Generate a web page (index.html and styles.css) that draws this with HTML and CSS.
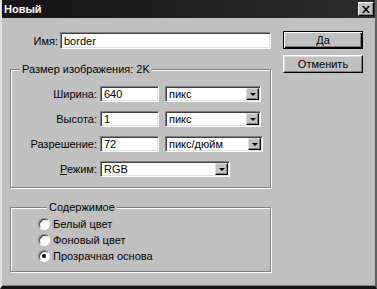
FILE: index.html
```html
<!DOCTYPE html>
<html lang="ru">
<head>
  <meta charset="UTF-8">
  <title>Новый</title>
  <link rel="stylesheet" href="styles.css">
</head>
<body>

<div class="window">
  <div class="titlebar">
    <span class="title">Новый</span>
    <button class="close-btn">
      <svg width="8" height="7" viewBox="0 0 8 7"><path d="M0 0h2l2 2.5 2-2.5h2l-3 3.5 3 3.5h-2l-2-2.5-2 2.5h-2l3-3.5z" fill="#000"/></svg>
    </button>
  </div>

  <div class="content">
    <div class="main">
      <div class="name-row">
        <label class="name-label">Имя:</label>
        <input class="field name-field" value="border">
      </div>

      <!-- Размер -->
      <fieldset class="group size-group">
        <legend>Размер изображения: 2K</legend>
        <div class="row">
          <label class="row-label">Ширина:</label>
          <input class="field num-field" value="640">
          <div class="combo unit"><span>пикс</span><i class="combo-btn"></i></div>
        </div>
        <div class="row">
          <label class="row-label">Высота:</label>
          <input class="field num-field" value="1">
          <div class="combo unit"><span>пикс</span><i class="combo-btn"></i></div>
        </div>
        <div class="row">
          <label class="row-label">Разрешение:</label>
          <input class="field num-field" value="72">
          <div class="combo unit wide"><span>пикс/дюйм</span><i class="combo-btn"></i></div>
        </div>
        <div class="row">
          <label class="row-label"><u>Р</u>ежим:</label>
          <div class="combo mode"><span>RGB</span><i class="combo-btn"></i></div>
        </div>
      </fieldset>

      <!-- Содержимое -->
      <fieldset class="group fill-group">
        <legend>Содержимое</legend>
        <label class="radio"><span class="radio-dot"></span>Белый цвет</label>
        <label class="radio"><span class="radio-dot"></span>Фоновый цвет</label>
        <label class="radio"><span class="radio-dot checked"></span>Прозрачная основа</label>
      </fieldset>
    </div>

    <div class="buttons">
      <button class="btn default">Да</button>
      <button class="btn">Отменить</button>
    </div>
  </div>
</div>

</body>
</html>
```

FILE: styles.css
```css
* {
  box-sizing: border-box;
}

body {
  margin: 0;
  width: 377px;
  height: 289px;
  overflow: hidden;
  background: #c0c0c0;
  font-family: "Liberation Sans", Arial, sans-serif;
  font-size: 11px;
  color: #000;
}

.window {
  height: 289px;
  border-left: 2px solid #e0e0e0;
  border-right: 2px solid #606060;
  border-bottom: 3px solid #151515;
  box-shadow: inset 0 -1px 0 #808080;
}

/* title bar */
.titlebar {
  height: 18px;
  display: flex;
  align-items: center;
  justify-content: space-between;
  padding: 0 1px 0 2px;
  background: linear-gradient(to right, #141414, #2c2c2c);
}

.title {
  color: #fff;
  font-weight: 700;
  font-size: 11px;
}

.close-btn {
  width: 16px;
  height: 14px;
  padding: 0;
  display: flex;
  align-items: center;
  justify-content: center;
  background: #c0c0c0;
  border: 1px solid;
  border-color: #fff #000 #000 #fff;
  box-shadow: inset -1px -1px #808080;
}

/* layout */
.content {
  display: flex;
  padding: 14px 0 0 8px;
}

.main {
  width: 261px;
}

.buttons {
  display: flex;
  flex-direction: column;
  gap: 6px;
  margin: -1px 0 0 12px;
}

/* fields */
.field {
  height: 16px;
  margin: 0;
  padding: 0 3px;
  font: inherit;
  color: #000;
  background: #fff;
  border: 1px solid;
  border-color: #808080 #fff #fff #808080;
  box-shadow: inset 1px 1px #404040, inset -1px -1px #dfdfdf;
  outline: none;
}

.name-row {
  display: flex;
  align-items: center;
}

.name-label {
  width: 48px;
  text-align: right;
  margin-right: 2px;
}

.name-field {
  width: 211px;
  height: 17px;
}

/* group boxes */
.group {
  margin: 14px 0 0;
  padding: 0;
  min-width: 0;
  border: 1px solid #808080;
  box-shadow: inset 1px 1px #fff, 1px 1px #fff;
}

.group legend {
  margin-left: 9px;
  padding: 0 2px;
  line-height: 13px;
  background: #c0c0c0;
}

.size-group {
  padding: 10px 0 10px;
}

.row {
  display: flex;
  align-items: center;
  height: 16px;
  margin-bottom: 9px;
}

.row:last-child {
  margin-bottom: 0;
}

.row-label {
  width: 86px;
  text-align: right;
  margin-right: 3px;
}

.num-field {
  width: 59px;
}

/* combo boxes */
.combo {
  height: 16px;
  display: flex;
  align-items: center;
  justify-content: space-between;
  padding: 0 1px 0 3px;
  background: #fff;
  border: 1px solid;
  border-color: #808080 #fff #fff #808080;
  box-shadow: inset 1px 1px #404040, inset -1px -1px #dfdfdf;
}

.unit {
  width: 96px;
  margin-left: 6px;
}

.unit.wide {
  width: 98px;
}

.mode {
  width: 130px;
}

.combo-btn {
  width: 13px;
  height: 12px;
  display: flex;
  align-items: center;
  justify-content: center;
  background: #c0c0c0;
  border: 1px solid;
  border-color: #dfdfdf #000 #000 #dfdfdf;
  box-shadow: inset -1px -1px #808080;
}

.combo-btn::after {
  content: "";
  border-left: 3px solid transparent;
  border-right: 3px solid transparent;
  border-top: 3px solid #000;
}

/* radios */
.fill-group {
  margin-top: 13px;
  padding: 2px 0 7px 27px;
}

.radio {
  display: flex;
  align-items: center;
  height: 16px;
}

.radio-dot {
  width: 12px;
  height: 12px;
  margin-right: 3px;
  border-radius: 50%;
  background: #fff;
  border: 1px solid;
  border-color: #808080 #fff #fff #808080;
  box-shadow: inset 1px 1px #404040;
  display: flex;
  align-items: center;
  justify-content: center;
}

.radio-dot.checked::after {
  content: "";
  width: 4px;
  height: 4px;
  border-radius: 50%;
  background: #000;
}

/* buttons */
.btn {
  width: 80px;
  height: 18px;
  padding: 0;
  font: inherit;
  color: #000;
  background: #c0c0c0;
  border: 1px solid;
  border-color: #fff #000 #000 #fff;
  box-shadow: inset -1px -1px #808080, inset 1px 1px #dfdfdf;
}

.btn.default {
  border-color: #000;
  box-shadow: inset 1px 1px #fff, inset -1px -1px #000, inset -2px -2px #808080;
}
```
